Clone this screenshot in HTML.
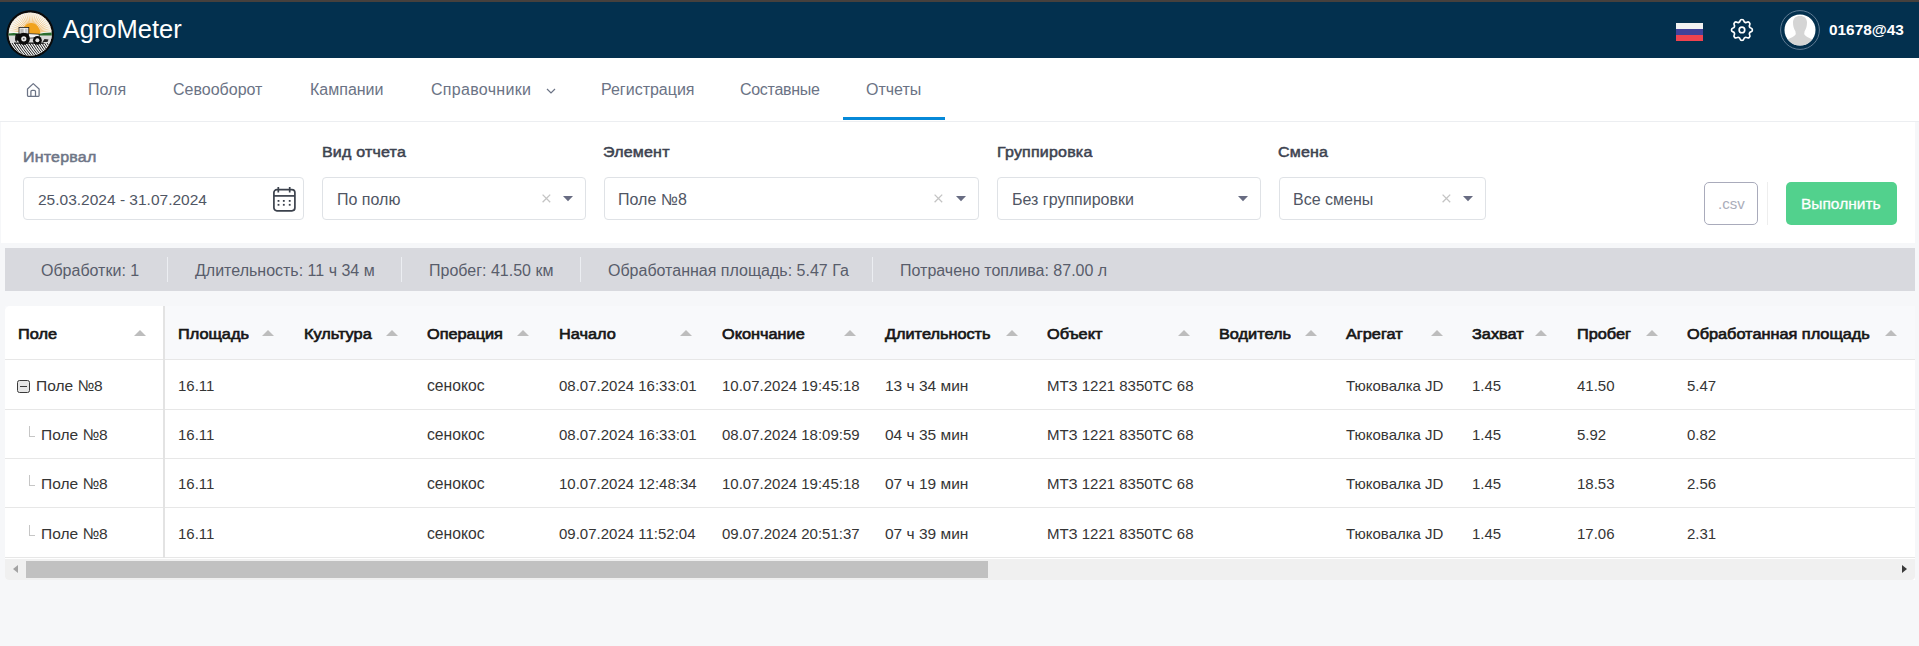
<!DOCTYPE html>
<html>
<head>
<meta charset="utf-8">
<style>
*{box-sizing:border-box;margin:0;padding:0}
html,body{width:1919px;height:646px;overflow:hidden;background:#f6f7f9;font-family:"Liberation Sans",sans-serif;position:relative}
.abs{position:absolute;white-space:nowrap}
#strip{position:absolute;left:0;top:0;width:1919px;height:2px;background:#46403d}
#hdr{position:absolute;left:0;top:2px;width:1919px;height:56px;background:#03304e}
#nav{position:absolute;left:0;top:58px;width:1919px;height:63px;background:#fff}
#navline{position:absolute;left:0;top:121px;width:1919px;height:1px;background:#eceef1}
.nv{position:absolute;top:80px;font-size:16px;color:#6b7385;line-height:20px}
#panel{position:absolute;left:1px;top:122px;width:1914px;height:121px;background:#fff}
.lbl{position:absolute;font-size:16px;font-weight:400;color:#3d4350;line-height:20px;-webkit-text-stroke:0.55px currentColor;letter-spacing:0.2px;transform:scaleY(0.89);transform-origin:0 0}
.box{position:absolute;top:177px;height:43px;border:1px solid #dfe2e6;border-radius:4px;background:#fff}
.inp{position:absolute;font-size:16px;color:#505664;line-height:20px}
.x{position:absolute;top:189px;font-size:20px;color:#b3b3b3;line-height:18px}
.car{position:absolute;top:196px;width:0;height:0;border-left:5px solid transparent;border-right:5px solid transparent;border-top:5px solid #636a78}
#sum{position:absolute;left:5px;top:248px;width:1910px;height:43px;background:#d8d9de}
.st{position:absolute;top:261px;font-size:16px;color:#585d6b;line-height:20px}
.sd{position:absolute;top:257px;width:1px;height:25px;background:#eceef2}
#tbl{position:absolute;left:5px;top:306px;width:1910px;height:274px;background:#fff;border-radius:4px 0 0 4px;overflow:hidden}
#thead{position:absolute;left:5px;top:306px;width:1910px;height:53px;background:#f8f9fb}
#pinhead{position:absolute;left:5px;top:306px;width:158px;height:53px;background:#fff;border-top-left-radius:5px}
.th{position:absolute;top:324px;font-size:16.3px;font-weight:400;color:#161616;line-height:20px;-webkit-text-stroke:0.7px currentColor;transform:scaleY(0.92);transform-origin:0 0}
.arr{position:absolute;top:330px;width:0;height:0;border-left:6px solid transparent;border-right:6px solid transparent;border-bottom:6px solid #bdbdbd}
.rl{position:absolute;left:5px;width:1910px;height:1px;background:#e7e7e7}
#pinline{position:absolute;left:163px;top:306px;width:2px;height:252px;background:#e3e3e3}
.td{position:absolute;font-size:15px;color:#353535;line-height:20px}
#track{position:absolute;left:5px;top:559px;width:1910px;height:21px;background:#f0f0f0;border-radius:0 0 4px 4px}
#thumb{position:absolute;left:26px;top:561px;width:962px;height:17px;background:#c1c1c1}
</style>
</head>
<body>
<div id="strip"></div>
<div id="hdr"></div>
<!-- logo -->
<svg class="abs" style="left:0;top:2px" width="60" height="56" viewBox="0 2 60 56">
  <defs>
    <clipPath id="lc"><circle cx="30.2" cy="34" r="21.6"/></clipPath>
    <radialGradient id="rg" cx="31" cy="33" r="22" gradientUnits="userSpaceOnUse">
      <stop offset="0.3" stop-color="#efa640"/><stop offset="0.7" stop-color="#f2c988"/><stop offset="1" stop-color="#f8ecd8"/>
    </radialGradient>
  </defs>
  <circle cx="30.2" cy="34" r="23.8" fill="#0a0a0a"/>
  <circle cx="30.2" cy="34" r="21.6" fill="#f7f5f1"/>
  <g clip-path="url(#lc)">
    <g stroke="url(#rg)" stroke-width="0.8">
      <line x1="31" y1="33" x2="54.8" y2="30.3"/><line x1="31" y1="33" x2="54.4" y2="27.7"/><line x1="31" y1="33" x2="53.7" y2="25.1"/><line x1="31" y1="33" x2="52.6" y2="22.6"/><line x1="31" y1="33" x2="51.3" y2="20.2"/><line x1="31" y1="33" x2="49.8" y2="18.0"/><line x1="31" y1="33" x2="48.0" y2="16.0"/><line x1="31" y1="33" x2="46.0" y2="14.2"/><line x1="31" y1="33" x2="43.8" y2="12.7"/><line x1="31" y1="33" x2="41.4" y2="11.4"/><line x1="31" y1="33" x2="38.9" y2="10.3"/><line x1="31" y1="33" x2="36.3" y2="9.6"/><line x1="31" y1="33" x2="33.7" y2="9.2"/><line x1="31" y1="33" x2="31.0" y2="9.0"/><line x1="31" y1="33" x2="28.3" y2="9.2"/><line x1="31" y1="33" x2="25.7" y2="9.6"/><line x1="31" y1="33" x2="23.1" y2="10.3"/><line x1="31" y1="33" x2="20.6" y2="11.4"/><line x1="31" y1="33" x2="18.2" y2="12.7"/><line x1="31" y1="33" x2="16.0" y2="14.2"/><line x1="31" y1="33" x2="14.0" y2="16.0"/><line x1="31" y1="33" x2="12.2" y2="18.0"/><line x1="31" y1="33" x2="10.7" y2="20.2"/><line x1="31" y1="33" x2="9.4" y2="22.6"/><line x1="31" y1="33" x2="8.3" y2="25.1"/><line x1="31" y1="33" x2="7.6" y2="27.7"/><line x1="31" y1="33" x2="7.2" y2="30.3"/>
    </g>
    <path d="M22 34 A9.2 11 0 0 1 40.4 34 Z" fill="#f1a31e"/>
    <path d="M7 33.6 Q14 32.6 20 33.6 L20 36 L7 36 Z" fill="#2c6e30"/>
    <path d="M36 34.5 Q44 32.5 54 32.6 L54 36 L36 36 Z" fill="#2c6e30"/>
    <rect x="6" y="35.5" width="50" height="7.5" fill="#dadada"/>
    <rect x="6" y="43" width="50" height="16" fill="#f0f0f0"/>
    <g stroke="#151515" stroke-width="0.95" fill="none"><path d="M2.0 43 Q5.5 49 13.0 58"/><path d="M4.5 43 Q8.0 49 15.5 58"/><path d="M7.0 43 Q10.5 49 18.0 58"/><path d="M9.5 43 Q13.0 49 20.5 58"/><path d="M12.0 43 Q15.5 49 23.0 58"/><path d="M14.5 43 Q18.0 49 25.5 58"/><path d="M17.0 43 Q20.5 49 28.0 58"/><path d="M19.5 43 Q23.0 49 30.5 58"/><path d="M22.0 43 Q25.5 49 33.0 58"/><path d="M24.5 43 Q28.0 49 35.5 58"/><path d="M27.0 43 Q30.5 49 38.0 58"/><path d="M29.5 43 Q33.0 49 40.5 58"/><path d="M32.0 43 Q35.5 49 43.0 58"/><path d="M34.5 43 Q38.0 49 45.5 58"/><path d="M37.0 43 Q40.5 49 48.0 58"/><path d="M39.5 43 Q43.0 49 50.5 58"/><path d="M42.0 43 Q45.5 49 53.0 58"/><path d="M44.5 43 Q48.0 49 55.5 58"/><path d="M47.0 43 Q50.5 49 58.0 58"/><path d="M49.5 43 Q53.0 49 60.5 58"/><path d="M52.0 43 Q55.5 49 63.0 58"/></g>
    <rect x="19" y="27.4" width="9.8" height="6.6" fill="#ececec" stroke="#1a1a1a" stroke-width="0.8"/>
    <rect x="20.4" y="28.8" width="3.2" height="4.2" fill="#b5b5b5"/>
    <rect x="25" y="28.8" width="2.6" height="4.2" fill="#c8c8c8"/>
    <path d="M15.5 34 L29 33.4 L29.5 38 L15.5 41 Z" fill="#101010"/>
    <path d="M28.5 33.6 L39 34.2 L39.6 37.6 L28.5 38.2 Z" fill="#f4f4f4" stroke="#111" stroke-width="0.7"/>
    <path d="M14 42.5 L44 42.5 L44 43.8 L14 43.8 Z" fill="#111"/>
    <circle cx="23.8" cy="38.8" r="6.1" fill="#0c0c0c"/>
    <circle cx="23.8" cy="38.8" r="2.6" fill="#e8e8e8"/>
    <circle cx="23.8" cy="38.8" r="0.9" fill="#555"/>
    <circle cx="37.4" cy="40.3" r="4.4" fill="#0c0c0c"/>
    <circle cx="37.4" cy="40.3" r="2" fill="#e8e8e8"/>
    <path d="M42.5 42 L44.5 39 L48.5 39.4 L47.5 42 Z" fill="#222"/>
    <path d="M16 36 Q14.5 39 16.5 42" stroke="#222" stroke-width="1" fill="none"/>
  </g>
</svg>
<div class="abs" style="left:62.7px;top:13.6px;font-size:25.5px;color:#fff;line-height:30px">AgroMeter</div>
<!-- flag -->
<div class="abs" style="left:1676px;top:23px;width:27px;height:6px;background:#f2f2f2"></div>
<div class="abs" style="left:1676px;top:29px;width:27px;height:6px;background:#42429a"></div>
<div class="abs" style="left:1676px;top:35px;width:27px;height:6px;background:#f0434f"></div>
<!-- gear -->
<svg class="abs" style="left:1727.5px;top:16.1px" width="27.9" height="27.9" viewBox="0 0 24 24">
  <path fill="none" stroke="#fff" stroke-width="1.45" stroke-linecap="round" stroke-linejoin="round" d="M10.325 4.317c.426 -1.756 2.924 -1.756 3.35 0a1.724 1.724 0 0 0 2.573 1.066c1.543 -.94 3.31 .826 2.37 2.37a1.724 1.724 0 0 0 1.065 2.572c1.756 .426 1.756 2.924 0 3.35a1.724 1.724 0 0 0 -1.066 2.573c.94 1.543 -.826 3.31 -2.37 2.370a1.724 1.724 0 0 0 -2.572 1.065c-.426 1.756 -2.924 1.756 -3.35 0a1.724 1.724 0 0 0 -2.573 -1.066c-1.543 .94 -3.31 -.826 -2.37 -2.37a1.724 1.724 0 0 0 -1.065 -2.572c-1.756 -.426 -1.756 -2.924 0 -3.35a1.724 1.724 0 0 0 1.066 -2.573c-.94 -1.543 .826 -3.31 2.37 -2.37c1 .608 2.296 .07 2.572 -1.065z"/>
  <circle cx="12" cy="12" r="2.4" fill="none" stroke="#fff" stroke-width="1.45"/>
</svg>
<!-- avatar -->
<svg class="abs" style="left:1780px;top:10px" width="40" height="40" viewBox="0 0 40 40">
  <circle cx="20" cy="20" r="19.4" fill="none" stroke="#5f7a92" stroke-width="1"/>
  <defs><clipPath id="ac"><circle cx="20" cy="20" r="15.5"/></clipPath></defs>
  <circle cx="20" cy="20" r="15.5" fill="#fff"/>
  <g clip-path="url(#ac)" fill="#d5d5d5">
    <path d="M20 6 C24.6 6 27 8.6 27 12.6 C27 16 26.2 19 24.6 21.2 L24.2 24 C25.4 26.6 29.5 28 33 29.6 L37 40 L3 40 L7 29.6 C10.5 28 14.6 26.6 15.8 24 L15.4 21.2 C13.8 19 13 16 13 12.6 C13 8.6 15.4 6 20 6 Z"/>
  </g>
</svg>
<div class="abs" style="left:1829px;top:21px;font-size:15.4px;font-weight:700;color:#fff;line-height:18px">01678@43</div>

<div id="nav"></div>
<div id="navline"></div>
<!-- home icon -->
<svg class="abs" style="left:26px;top:82px" width="15" height="16" viewBox="0 0 15 16">
  <path d="M1.5 7 L7.25 1.6 L13.1 7 V13.6 Q13.1 14.3 12.4 14.3 H2.2 Q1.5 14.3 1.5 13.6 Z" fill="none" stroke="#6b7385" stroke-width="1.25" stroke-linejoin="round"/>
  <path d="M4.9 14.3 V9.6 Q4.9 8.3 6.2 8.3 H8.2 Q9.5 8.3 9.5 9.6 V14.3" fill="none" stroke="#6b7385" stroke-width="1.25"/>
</svg>
<div class="nv" style="left:88px">Поля</div>
<div class="nv" style="left:173px">Севооборот</div>
<div class="nv" style="left:310px">Кампании</div>
<div class="nv" style="left:431px;letter-spacing:0.3px">Справочники</div>
<svg class="abs" style="left:545px;top:86.7px" width="12" height="8" viewBox="0 0 12 8"><path d="M2 2 L6 6 L10 2" fill="none" stroke="#6b7385" stroke-width="1.2"/></svg>
<div class="nv" style="left:601px">Регистрация</div>
<div class="nv" style="left:740px;letter-spacing:-0.3px">Составные</div>
<div class="nv" style="left:866px">Отчеты</div>
<div class="abs" style="left:843px;top:117px;width:102px;height:3px;background:#0689d8"></div>

<div id="panel"></div>
<div class="lbl" style="left:23px;top:149px;color:#6e7586">Интервал</div>
<div class="lbl" style="left:322px;top:144px">Вид отчета</div>
<div class="lbl" style="left:603px;top:144px">Элемент</div>
<div class="lbl" style="left:997px;top:144px">Группировка</div>
<div class="lbl" style="left:1278px;top:144px">Смена</div>

<div class="box" style="left:23px;width:281px"></div>
<div class="inp" style="left:38px;top:190px;font-size:15.5px">25.03.2024 - 31.07.2024</div>
<svg class="abs" style="left:272px;top:186px" width="25" height="27" viewBox="0 0 25 27">
  <rect x="1.9" y="3.6" width="21" height="21.2" rx="3" fill="none" stroke="#3b414c" stroke-width="1.7"/>
  <line x1="1.9" y1="9.9" x2="22.9" y2="9.9" stroke="#3b414c" stroke-width="1.7"/>
  <line x1="6.3" y1="1" x2="6.3" y2="6.5" stroke="#3b414c" stroke-width="1.7"/><line x1="17.7" y1="1" x2="17.7" y2="6.5" stroke="#3b414c" stroke-width="1.7"/>
  <g fill="#3b414c"><rect x="5.6" y="14" width="1.8" height="1.8"/><rect x="10.9" y="14" width="1.8" height="1.8"/><rect x="16.8" y="14" width="1.8" height="1.8"/><rect x="5.6" y="17.9" width="1.8" height="1.8"/><rect x="10.9" y="17.9" width="1.8" height="1.8"/><rect x="16.8" y="17.9" width="1.8" height="1.8"/></g>
</svg>

<div class="box" style="left:322px;width:264px"></div>
<div class="inp" style="left:337px;top:190px">По полю</div>

<div class="box" style="left:604px;width:375px"></div>
<div class="inp" style="left:618px;top:190px">Поле №8</div>

<div class="box" style="left:997px;width:264px"></div>
<div class="inp" style="left:1012px;top:190px">Без группировки</div>

<div class="box" style="left:1279px;width:207px"></div>
<div class="inp" style="left:1293px;top:190px">Все смены</div>

<svg class="abs" style="left:542.1px;top:194px" width="9" height="9" viewBox="0 0 9 9"><path d="M0.6 0.6 L8.2 8.2 M8.2 0.6 L0.6 8.2" stroke="#c4c4c4" stroke-width="1.3"/></svg>
<svg class="abs" style="left:934px;top:194px" width="9" height="9" viewBox="0 0 9 9"><path d="M0.6 0.6 L8.2 8.2 M8.2 0.6 L0.6 8.2" stroke="#c4c4c4" stroke-width="1.3"/></svg>
<svg class="abs" style="left:1441.5px;top:194px" width="9" height="9" viewBox="0 0 9 9"><path d="M0.6 0.6 L8.2 8.2 M8.2 0.6 L0.6 8.2" stroke="#c4c4c4" stroke-width="1.3"/></svg>
<svg class="abs" style="left:563.2px;top:196px" width="10" height="5.5" viewBox="0 0 10 5.5"><path d="M0 0 H10 L5 5.3 Z" fill="#686c82"/></svg>
<svg class="abs" style="left:956px;top:196px" width="10" height="5.5" viewBox="0 0 10 5.5"><path d="M0 0 H10 L5 5.3 Z" fill="#686c82"/></svg>
<svg class="abs" style="left:1237.6px;top:196px" width="10" height="5.5" viewBox="0 0 10 5.5"><path d="M0 0 H10 L5 5.3 Z" fill="#686c82"/></svg>
<svg class="abs" style="left:1462.8px;top:196px" width="10" height="5.5" viewBox="0 0 10 5.5"><path d="M0 0 H10 L5 5.3 Z" fill="#686c82"/></svg>
<div class="abs" style="left:1704px;top:182px;width:54px;height:43px;border:1px solid #a9abbb;border-radius:5px;background:#fff"></div>
<div class="abs" style="left:1718px;top:194px;font-size:15px;color:#aaadba;line-height:20px">.csv</div>
<div class="abs" style="left:1767px;top:182px;width:1px;height:43px;background:#eeeeee"></div>
<div class="abs" style="left:1786px;top:182px;width:111px;height:43px;background:#52d18d;border-radius:5px"></div>
<div class="abs" style="left:1801px;top:194px;font-size:15.5px;font-weight:400;color:#fff;line-height:20px;-webkit-text-stroke:0.3px #fff">Выполнить</div>

<div id="sum"></div>
<div class="st" style="left:41px">Обработки: 1</div>
<div class="sd" style="left:167px"></div>
<div class="st" style="left:195px">Длительность: 11 ч 34 м</div>
<div class="sd" style="left:401px"></div>
<div class="st" style="left:429px">Пробег: 41.50 км</div>
<div class="sd" style="left:580px"></div>
<div class="st" style="left:608px">Обработанная площадь: 5.47 Га</div>
<div class="sd" style="left:872px"></div>
<div class="st" style="left:900px">Потрачено топлива: 87.00 л</div>

<div id="tbl"></div>
<div id="thead"></div>
<div id="pinhead"></div>
<div class="th" style="left:18px">Поле</div><div class="arr" style="left:134px"></div>
<div class="th" style="left:178px">Площадь</div><div class="arr" style="left:262px"></div>
<div class="th" style="left:304px">Культура</div><div class="arr" style="left:386px"></div>
<div class="th" style="left:427px">Операция</div><div class="arr" style="left:517px"></div>
<div class="th" style="left:559px">Начало</div><div class="arr" style="left:680px"></div>
<div class="th" style="left:722px">Окончание</div><div class="arr" style="left:844px"></div>
<div class="th" style="left:885px">Длительность</div><div class="arr" style="left:1006px"></div>
<div class="th" style="left:1047px">Объект</div><div class="arr" style="left:1178px"></div>
<div class="th" style="left:1219px">Водитель</div><div class="arr" style="left:1305px"></div>
<div class="th" style="left:1346px">Агрегат</div><div class="arr" style="left:1431px"></div>
<div class="th" style="left:1472px">Захват</div><div class="arr" style="left:1535px"></div>
<div class="th" style="left:1577px">Пробег</div><div class="arr" style="left:1646px"></div>
<div class="th" style="left:1687px">Обработанная площадь</div><div class="arr" style="left:1885px"></div>

<div class="rl" style="top:359px"></div>
<div class="rl" style="top:409px"></div>
<div class="rl" style="top:458px"></div>
<div class="rl" style="top:507px"></div>
<div class="rl" style="top:557px"></div>
<div id="pinline"></div>

<!-- row 1 -->
<div class="abs" style="left:17px;top:380px;width:13px;height:13px;border:1.3px solid #3a3a3a;border-radius:2.5px;background:#e6e6e6"></div>
<div class="abs" style="left:20px;top:386px;width:7px;height:1.3px;background:#3a3a3a"></div>
<div id="rows"></div>
<div class="td" style="left:36px;top:376px;font-size:15.5px">Поле №8</div>
<div class="td" style="left:178px;top:376px">16.11</div>
<div class="td" style="left:427px;top:376px;font-size:15.7px">сенокос</div>
<div class="td" style="left:559px;top:376px">08.07.2024 16:33:01</div>
<div class="td" style="left:722px;top:376px">10.07.2024 19:45:18</div>
<div class="td" style="left:885px;top:376px;font-size:15.5px">13 ч 34 мин</div>
<div class="td" style="left:1047px;top:376px">МТЗ 1221 8350ТС 68</div>
<div class="td" style="left:1346px;top:376px">Тюковалка JD</div>
<div class="td" style="left:1472px;top:376px">1.45</div>
<div class="td" style="left:1577px;top:376px">41.50</div>
<div class="td" style="left:1687px;top:376px">5.47</div>
<!-- row 2 -->
<div class="abs" style="left:29px;top:426px;width:1px;height:11px;background:#c6c6c6"></div><div class="abs" style="left:29px;top:436px;width:6px;height:1px;background:#c6c6c6"></div>
<div class="td" style="left:41px;top:425px;font-size:15.5px">Поле №8</div>
<div class="td" style="left:178px;top:425px">16.11</div>
<div class="td" style="left:427px;top:425px;font-size:15.7px">сенокос</div>
<div class="td" style="left:559px;top:425px">08.07.2024 16:33:01</div>
<div class="td" style="left:722px;top:425px">08.07.2024 18:09:59</div>
<div class="td" style="left:885px;top:425px;font-size:15.5px">04 ч 35 мин</div>
<div class="td" style="left:1047px;top:425px">МТЗ 1221 8350ТС 68</div>
<div class="td" style="left:1346px;top:425px">Тюковалка JD</div>
<div class="td" style="left:1472px;top:425px">1.45</div>
<div class="td" style="left:1577px;top:425px">5.92</div>
<div class="td" style="left:1687px;top:425px">0.82</div>
<!-- row 3 -->
<div class="abs" style="left:29px;top:475px;width:1px;height:11px;background:#c6c6c6"></div><div class="abs" style="left:29px;top:485px;width:6px;height:1px;background:#c6c6c6"></div>
<div class="td" style="left:41px;top:474px;font-size:15.5px">Поле №8</div>
<div class="td" style="left:178px;top:474px">16.11</div>
<div class="td" style="left:427px;top:474px;font-size:15.7px">сенокос</div>
<div class="td" style="left:559px;top:474px">10.07.2024 12:48:34</div>
<div class="td" style="left:722px;top:474px">10.07.2024 19:45:18</div>
<div class="td" style="left:885px;top:474px;font-size:15.5px">07 ч 19 мин</div>
<div class="td" style="left:1047px;top:474px">МТЗ 1221 8350ТС 68</div>
<div class="td" style="left:1346px;top:474px">Тюковалка JD</div>
<div class="td" style="left:1472px;top:474px">1.45</div>
<div class="td" style="left:1577px;top:474px">18.53</div>
<div class="td" style="left:1687px;top:474px">2.56</div>
<!-- row 4 -->
<div class="abs" style="left:29px;top:525px;width:1px;height:11px;background:#c6c6c6"></div><div class="abs" style="left:29px;top:535px;width:6px;height:1px;background:#c6c6c6"></div>
<div class="td" style="left:41px;top:524px;font-size:15.5px">Поле №8</div>
<div class="td" style="left:178px;top:524px">16.11</div>
<div class="td" style="left:427px;top:524px;font-size:15.7px">сенокос</div>
<div class="td" style="left:559px;top:524px">09.07.2024 11:52:04</div>
<div class="td" style="left:722px;top:524px">09.07.2024 20:51:37</div>
<div class="td" style="left:885px;top:524px;font-size:15.5px">07 ч 39 мин</div>
<div class="td" style="left:1047px;top:524px">МТЗ 1221 8350ТС 68</div>
<div class="td" style="left:1346px;top:524px">Тюковалка JD</div>
<div class="td" style="left:1472px;top:524px">1.45</div>
<div class="td" style="left:1577px;top:524px">17.06</div>
<div class="td" style="left:1687px;top:524px">2.31</div>

<div id="track"></div>
<div id="thumb"></div>
<div class="abs" style="left:13px;top:565px;width:0;height:0;border-top:4.5px solid transparent;border-bottom:4.5px solid transparent;border-right:5px solid #a3a3a3"></div>
<div class="abs" style="left:1902px;top:565px;width:0;height:0;border-top:4.5px solid transparent;border-bottom:4.5px solid transparent;border-left:5px solid #3a3a3a"></div>
</body>
</html>
